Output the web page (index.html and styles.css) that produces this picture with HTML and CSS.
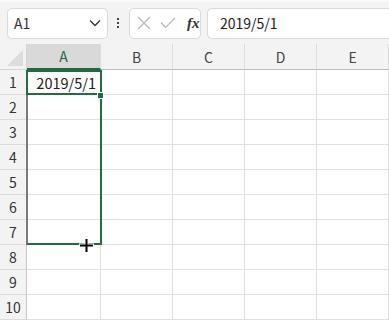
FILE: index.html
```html
<!DOCTYPE html>
<html lang="ja">
<head>
  <meta charset="UTF-8" />
  <title>Sheet</title>
  <link rel="stylesheet" href="styles.css">
</head>
<body>
  <div class="toolbar">
    <div class="name-box">
      <span class="name-text">A1</span>
      <svg class="chevron" width="12" height="8" viewBox="0 0 12 8"><path d="M1 1.5 L6 6.5 L11 1.5" fill="none" stroke="#333" stroke-width="1.3"/></svg>
    </div>
    <div class="dots"><span></span><span></span><span></span></div>
    <div class="fx-buttons">
      <svg width="14" height="14" viewBox="0 0 14 14"><path d="M1 1 L13 13 M13 1 L1 13" stroke="#b8b8b8" stroke-width="1.2"/></svg>
      <svg width="16" height="12" viewBox="0 0 16 12"><path d="M1 5.5 L5.5 10.5 L15 1" fill="none" stroke="#b8b8b8" stroke-width="1.2"/></svg>
      <span class="fx">fx</span>
    </div>
    <div class="formula">2019/5/1</div>
  </div>

  <div class="sheet">
    <div class="corner"><span class="tri"></span></div>
    <div class="col-head active">A</div>
    <div class="col-head">B</div>
    <div class="col-head">C</div>
    <div class="col-head">D</div>
    <div class="col-head">E</div>

    <div class="row-head">1</div><div class="cell date">2019/5/1</div><div class="cell"></div><div class="cell"></div><div class="cell"></div><div class="cell"></div>
    <div class="row-head">2</div><div class="cell"></div><div class="cell"></div><div class="cell"></div><div class="cell"></div><div class="cell"></div>
    <div class="row-head">3</div><div class="cell"></div><div class="cell"></div><div class="cell"></div><div class="cell"></div><div class="cell"></div>
    <div class="row-head">4</div><div class="cell"></div><div class="cell"></div><div class="cell"></div><div class="cell"></div><div class="cell"></div>
    <div class="row-head">5</div><div class="cell"></div><div class="cell"></div><div class="cell"></div><div class="cell"></div><div class="cell"></div>
    <div class="row-head">6</div><div class="cell"></div><div class="cell"></div><div class="cell"></div><div class="cell"></div><div class="cell"></div>
    <div class="row-head">7</div><div class="cell"></div><div class="cell"></div><div class="cell"></div><div class="cell"></div><div class="cell"></div>
    <div class="row-head">8</div><div class="cell"></div><div class="cell"></div><div class="cell"></div><div class="cell"></div><div class="cell"></div>
    <div class="row-head">9</div><div class="cell"></div><div class="cell"></div><div class="cell"></div><div class="cell"></div><div class="cell"></div>
    <div class="row-head">10</div><div class="cell"></div><div class="cell"></div><div class="cell"></div><div class="cell"></div><div class="cell"></div>

    <div class="range"></div>
    <div class="active-cell"></div>
    <div class="handle"></div>
    <svg class="cursor" width="15" height="15" viewBox="0 0 15 15">
      <path d="M7.5 0 V15 M0 7.5 H15" stroke="#fff" stroke-width="4"/>
      <path d="M7.5 1 V14 M1 7.5 H14" stroke="#000" stroke-width="2"/>
    </svg>
  </div>
</body>
</html>
```

FILE: styles.css
```css
body {
  margin: 0;
  width: 389px;
  height: 321px;
  overflow: hidden;
  background: #fff;
  font-family: "Noto Sans CJK JP", "Noto Sans", sans-serif;
  color: #222;
}

.toolbar {
  display: flex;
  align-items: center;
  height: 44px;
  padding-left: 7px;
  background: #f3f3f3;
  border-top: 2px solid #fbfbfb;
  box-sizing: border-box;
}

.name-box {
  display: flex;
  align-items: center;
  justify-content: space-between;
  width: 101px;
  height: 31px;
  box-sizing: border-box;
  padding: 0 6px 0 6px;
  background: #fff;
  border: 1px solid #dadada;
  border-radius: 5px;
  font-size: 14px;
}

.name-text {
  color: #333;
}

.dots {
  display: flex;
  flex-direction: column;
  gap: 2px;
  margin: 0 10px 0 9px;
}

.dots span {
  width: 2px;
  height: 2px;
  background: #444;
}

.fx-buttons {
  display: flex;
  align-items: center;
  gap: 9px;
  width: 72px;
  height: 31px;
  box-sizing: border-box;
  padding-left: 7px;
  background: #fff;
  border: 1px solid #dadada;
  border-radius: 5px;
}

.fx {
  font-family: "Liberation Serif", serif;
  font-style: italic;
  font-weight: bold;
  font-size: 15px;
  color: #333;
  margin-left: 2px;
}

.formula {
  flex: 1;
  height: 31px;
  margin-left: 6px;
  box-sizing: border-box;
  padding-left: 12px;
  background: #fff;
  border: 1px solid #dadada;
  border-right: none;
  border-radius: 5px 0 0 5px;
  font-size: 14px;
  line-height: 29px;
  color: #222;
}

.sheet {
  position: relative;
  display: grid;
  grid-template-columns: 27px 74px 72px 72px 72px 72px;
  grid-template-rows: 26px repeat(10, 25px);
}

.corner {
  position: relative;
  background: #f3f3f3;
  border-right: 1px solid #d4d4d4;
  border-bottom: 1px solid #d4d4d4;
}

.tri {
  position: absolute;
  right: 3px;
  bottom: 3px;
  width: 0;
  height: 0;
  border-left: 16px solid transparent;
  border-bottom: 16px solid #dcdcdc;
}

.col-head {
  display: flex;
  align-items: center;
  justify-content: center;
  background: #f3f3f3;
  border-right: 1px solid #dcdcdc;
  border-bottom: 1px solid #bcbcbc;
  font-size: 14px;
  color: #444;
}

.col-head.active {
  background: #d9d9d9;
  color: #1d6b40;
  border-bottom: 2px solid #1d6b40;
}

.row-head {
  display: flex;
  align-items: center;
  justify-content: center;
  background: #f3f3f3;
  border-right: 1px solid #c8c8c8;
  border-bottom: 1px solid #dcdcdc;
  font-size: 14px;
  color: #333;
}

.cell {
  border-right: 1px solid #e1e1e1;
  border-bottom: 1px solid #e1e1e1;
  font-size: 14.5px;
}

.date {
  display: flex;
  align-items: center;
  justify-content: flex-end;
  padding-right: 4px;
}

.range {
  position: absolute;
  left: 26px;
  top: 26px;
  width: 72px;
  height: 173px;
  border-left: 2px solid #7a7a7a;
  border-right: 2px solid #1f6e43;
  border-bottom: 2px solid #1f6e43;
}

.active-cell {
  position: absolute;
  left: 26px;
  top: 26px;
  width: 72px;
  height: 21px;
  border: 2px solid #1f6e43;
}

.handle {
  position: absolute;
  left: 97px;
  top: 48px;
  width: 5px;
  height: 5px;
  background: #1f6e43;
  border: 1px solid #fff;
}

.cursor {
  position: absolute;
  left: 79px;
  top: 194px;
}
```
